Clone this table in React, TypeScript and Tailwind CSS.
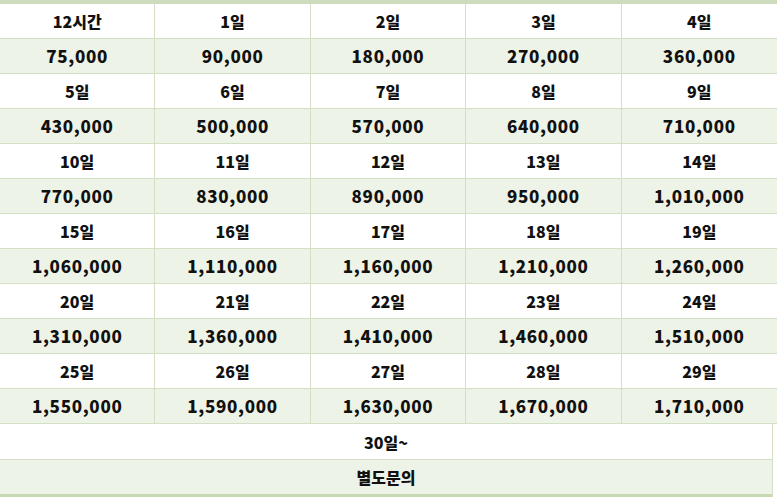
import React from 'react';

const rows = [
  [
    ['12시간', '75,000'],
    ['1일', '90,000'],
    ['2일', '180,000'],
    ['3일', '270,000'],
    ['4일', '360,000'],
  ],
  [
    ['5일', '430,000'],
    ['6일', '500,000'],
    ['7일', '570,000'],
    ['8일', '640,000'],
    ['9일', '710,000'],
  ],
  [
    ['10일', '770,000'],
    ['11일', '830,000'],
    ['12일', '890,000'],
    ['13일', '950,000'],
    ['14일', '1,010,000'],
  ],
  [
    ['15일', '1,060,000'],
    ['16일', '1,110,000'],
    ['17일', '1,160,000'],
    ['18일', '1,210,000'],
    ['19일', '1,260,000'],
  ],
  [
    ['20일', '1,310,000'],
    ['21일', '1,360,000'],
    ['22일', '1,410,000'],
    ['23일', '1,460,000'],
    ['24일', '1,510,000'],
  ],
  [
    ['25일', '1,550,000'],
    ['26일', '1,590,000'],
    ['27일', '1,630,000'],
    ['28일', '1,670,000'],
    ['29일', '1,710,000'],
  ],
];

const font = { fontFamily: '"Noto Sans CJK KR", "Noto Sans", sans-serif' };

const App = () => {
  return (
    <div className="w-[777px] h-[500px] bg-white text-[#111] overflow-hidden" style={font}>
      <div className="border-t-4 border-[#cddcbc]">
        {rows.map((group, gi) => (
          <React.Fragment key={gi}>
            <div className="grid grid-cols-5 h-[35px] border-b border-[#d3e0c5] bg-white">
              {group.map(([label], i) => (
                <div
                  key={i}
                  className={`flex items-center justify-center text-[16px] font-extrabold ${i < 4 ? 'border-r border-[#d3e0c5]' : ''}`}
                >
                  {label}
                </div>
              ))}
            </div>
            <div className="grid grid-cols-5 h-[35px] border-b border-[#d3e0c5] bg-[#eef3e7]">
              {group.map(([, price], i) => (
                <div
                  key={i}
                  className={`flex items-center justify-center text-[17px] font-black tracking-[0.04em] ${i < 4 ? 'border-r border-[#d3e0c5]' : ''}`}
                >
                  {price}
                </div>
              ))}
            </div>
          </React.Fragment>
        ))}
        <div className="w-[773px] border-r border-[#d3e0c5]">
          <div className="h-[36px] flex items-center justify-center border-b border-[#d3e0c5] bg-white text-[16px] font-extrabold">
            30일~
          </div>
          <div className="h-[37px] flex items-center justify-center bg-[#eef3e7] border-b-[3px] border-[#c5d9b2] text-[16px] font-extrabold">
            별도문의
          </div>
        </div>
      </div>
    </div>
  );
};

export default App;
